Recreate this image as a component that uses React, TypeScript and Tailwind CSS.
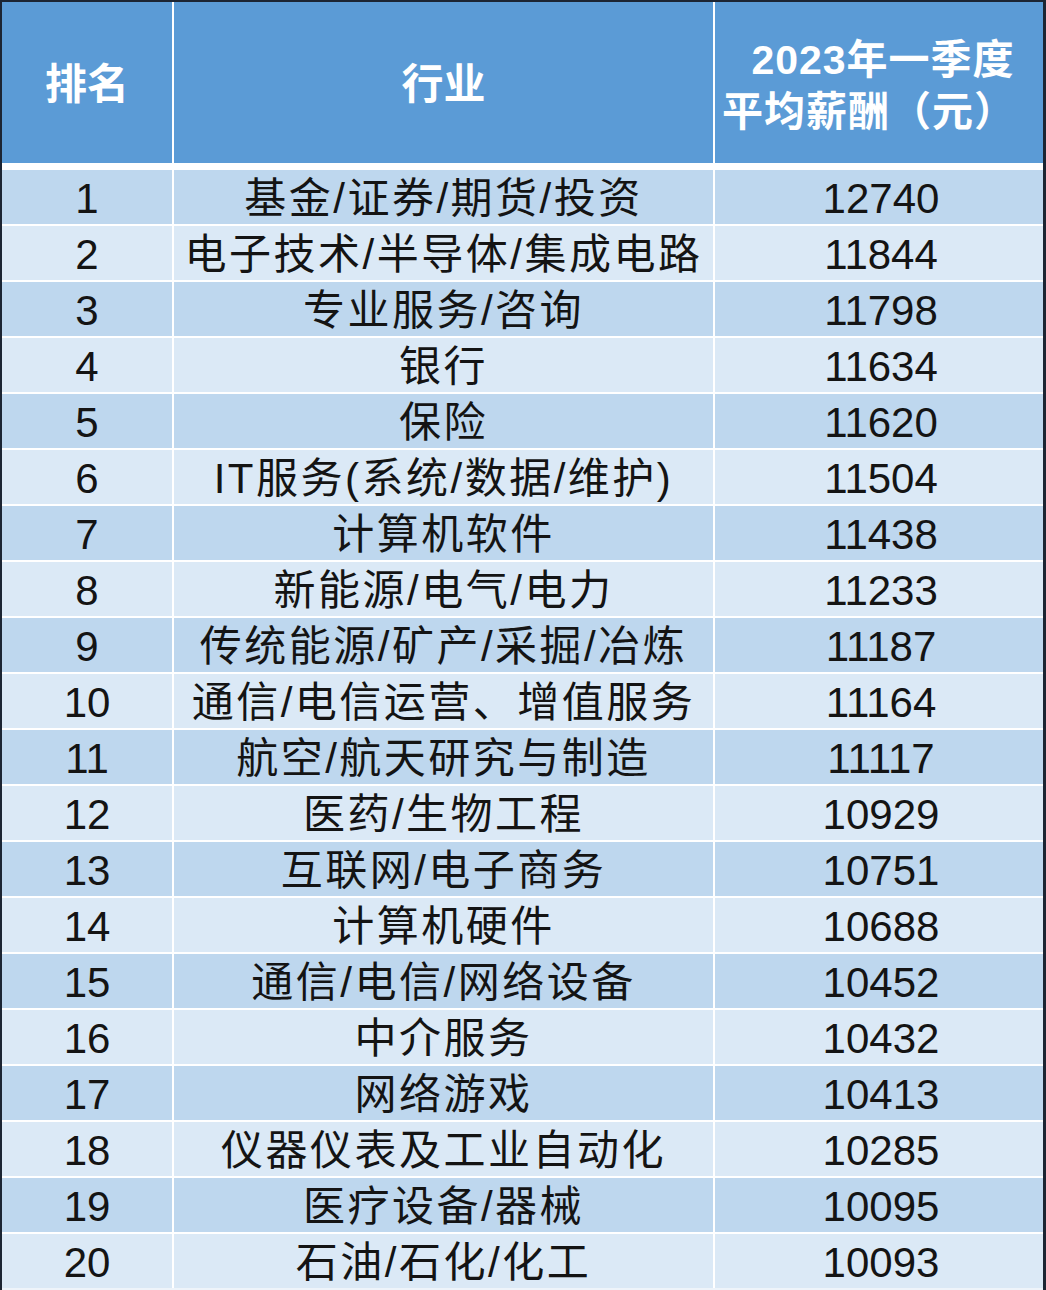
const rows: [string, string][] = [
  ['基金/证券/期货/投资', '12740'],
  ['电子技术/半导体/集成电路', '11844'],
  ['专业服务/咨询', '11798'],
  ['银行', '11634'],
  ['保险', '11620'],
  ['IT服务(系统/数据/维护)', '11504'],
  ['计算机软件', '11438'],
  ['新能源/电气/电力', '11233'],
  ['传统能源/矿产/采掘/冶炼', '11187'],
  ['通信/电信运营、增值服务', '11164'],
  ['航空/航天研究与制造', '11117'],
  ['医药/生物工程', '10929'],
  ['互联网/电子商务', '10751'],
  ['计算机硬件', '10688'],
  ['通信/电信/网络设备', '10452'],
  ['中介服务', '10432'],
  ['网络游戏', '10413'],
  ['仪器仪表及工业自动化', '10285'],
  ['医疗设备/器械', '10095'],
  ['石油/石化/化工', '10093'],
];

export default function App() {
  return (
    <div
      className="h-[1290px] w-[1046px] overflow-hidden bg-[#1c2533] pl-[2px] pr-[3px] pt-[2px]"
      style={{ fontFamily: '"Liberation Sans", "Noto Sans CJK SC", sans-serif' }}
    >
      <div className="flex h-full flex-col bg-[#eef4fa]">
        {/* header */}
        <div className="grid h-[161px] grid-cols-[170px_539px_328px] gap-x-[2px] bg-white">
          <div className="flex items-center justify-center bg-[#5b9bd6] pt-[4px] text-[42px] font-bold text-white">
            排名
          </div>
          <div className="flex items-center justify-center bg-[#5b9bd6] pt-[4px] text-[42px] font-bold text-white">
            行业
          </div>
          <div className="flex flex-col items-center justify-center bg-[#5b9bd6] pt-[6px] text-[41px] font-bold leading-[52px] tracking-[1px] text-white">
            <span className="pl-[8px]">2023年一季度</span>
            <span className="pr-[20px]">平均薪酬（元）</span>
          </div>
        </div>
        <div className="h-[7px] bg-white" />
        <div className="flex flex-col gap-y-[2px] bg-white">
          {rows.map(([name, pay], i) => {
            const bg = i % 2 === 0 ? 'bg-[#bed7ee]' : 'bg-[#dbe9f6]';
            return (
              <div
                key={i}
                className="grid h-[54px] grid-cols-[170px_539px_328px] gap-x-[2px] text-[42px] leading-none text-[#141414]"
              >
                <div className={`flex items-center justify-center pt-[4px] ${bg}`}>{i + 1}</div>
                <div className={`flex items-center justify-center whitespace-nowrap pt-[4px] tracking-[2.5px] ${bg}`}>
                  {name}
                </div>
                <div className={`flex items-center justify-center pl-[4px] pt-[4px] ${bg}`}>{pay}</div>
              </div>
            );
          })}
        </div>
      </div>
    </div>
  );
}
